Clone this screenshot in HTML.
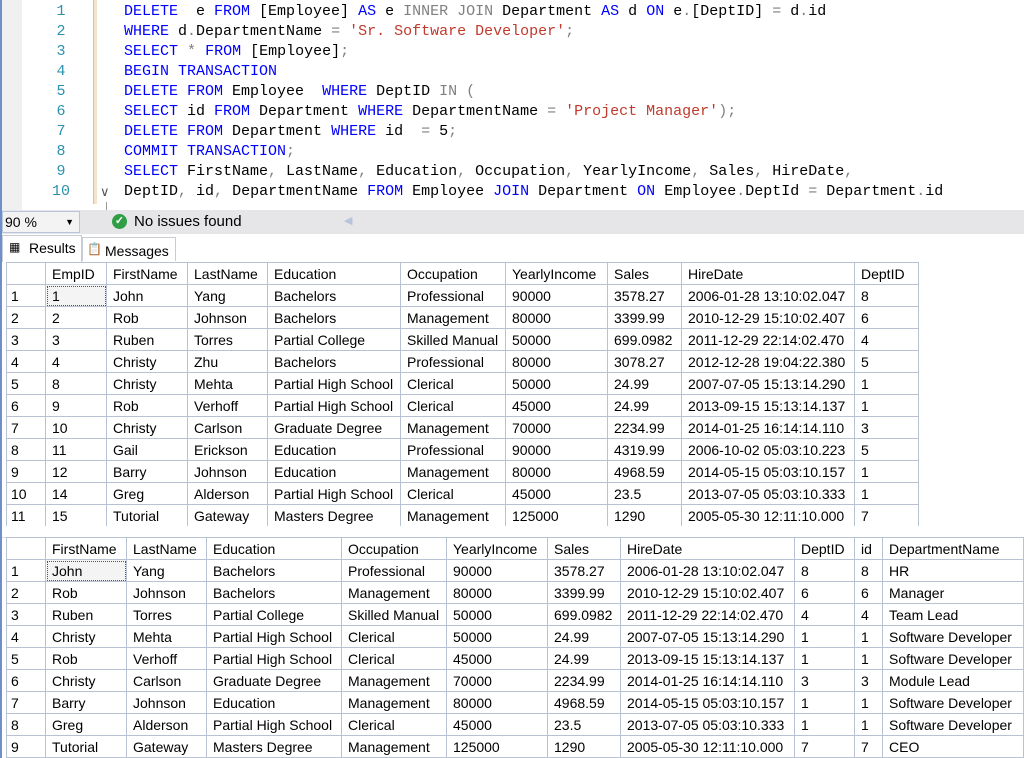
<!DOCTYPE html>
<html><head><meta charset="utf-8"><style>
*{margin:0;padding:0;box-sizing:border-box}
body{width:1024px;height:758px;overflow:hidden;background:#fff;position:relative;font-family:"Liberation Sans",Arial,sans-serif}
#ed{position:absolute;left:0;top:0;width:1024px;height:210px;background:#fff}
#gut{position:absolute;left:2px;top:0;width:20px;height:210px;background:#f0f0f0}
#lb{position:absolute;left:0;top:0;width:2px;height:758px;background:#6f8fc8}
.ln{position:absolute;left:46px;width:30px;text-align:center;font:15px "Liberation Mono",monospace;color:#2b91af;line-height:20px}
.cl{position:absolute;left:124px;font:15px "Liberation Mono",monospace;line-height:20px;white-space:pre;color:#000}
.k{color:#0000ff}.g{color:#808080}.s{color:#c0392b}
#bar{position:absolute;left:93px;top:0;width:4px;height:204px;background:#f5e5c8;border-left:1px solid #e8c27a}
#st{position:absolute;left:0;top:210px;width:1024px;height:24px;background:#e6e6e9}
#zm{position:absolute;left:2px;top:211px;width:78px;height:22px;background:#f3f3f3;border:1px solid #b8c6dc;font-size:14px;line-height:20px;padding-left:2px}
#tabs{position:absolute;left:2px;top:234px;width:1022px;height:28px;background:#fff}
.tab{position:absolute;top:3px;height:24px;font-size:14px;line-height:22px;border:1px solid #c8ccd4;border-bottom:none;background:#fff}
table{position:absolute;border-collapse:collapse;table-layout:fixed;font-size:14px;background:#fff}
td{border:1px solid #b9c2d2;height:22px;padding:0 0 0 6px;white-space:nowrap;overflow:hidden;line-height:20px}
td:first-child{padding-left:4px}
.sel{outline:1px dotted #555;outline-offset:-2px;background:#f4f4f4}
#mid{position:absolute;left:2px;top:526px;width:1022px;height:12px;background:#fff;border-bottom:1px solid #d8dde6}
</style></head><body>
<div id="ed">
<div id="gut"></div>
<div id="bar"></div>
<div class="ln" style="top:2px">1</div><div class="ln" style="top:22px">2</div><div class="ln" style="top:42px">3</div><div class="ln" style="top:62px">4</div><div class="ln" style="top:82px">5</div><div class="ln" style="top:102px">6</div><div class="ln" style="top:122px">7</div><div class="ln" style="top:142px">8</div><div class="ln" style="top:162px">9</div><div class="ln" style="top:182px">10</div>
<div style="position:absolute;left:100px;top:182px;font-size:13px;color:#555;line-height:20px">&#8744;</div>
<div style="position:absolute;left:106px;top:202px;width:1px;height:8px;background:#999"></div>
<div class="cl" style="top:2px"><span class="k">DELETE</span>  e <span class="k">FROM</span> [Employee] <span class="k">AS</span> e <span class="g">INNER JOIN</span> Department <span class="k">AS</span> d <span class="k">ON</span> e<span class="g">.</span>[DeptID] <span class="g">=</span> d<span class="g">.</span>id</div>
<div class="cl" style="top:22px"><span class="k">WHERE</span> d<span class="g">.</span>DepartmentName <span class="g">=</span> <span class="s">'Sr. Software Developer'</span><span class="g">;</span></div>
<div class="cl" style="top:42px"><span class="k">SELECT</span> <span class="g">*</span> <span class="k">FROM</span> [Employee]<span class="g">;</span></div>
<div class="cl" style="top:62px"><span class="k">BEGIN TRANSACTION</span></div>
<div class="cl" style="top:82px"><span class="k">DELETE FROM</span> Employee  <span class="k">WHERE</span> DeptID <span class="g">IN (</span></div>
<div class="cl" style="top:102px"><span class="k">SELECT</span> id <span class="k">FROM</span> Department <span class="k">WHERE</span> DepartmentName <span class="g">=</span> <span class="s">'Project Manager'</span><span class="g">);</span></div>
<div class="cl" style="top:122px"><span class="k">DELETE FROM</span> Department <span class="k">WHERE</span> id  <span class="g">=</span> 5<span class="g">;</span></div>
<div class="cl" style="top:142px"><span class="k">COMMIT TRANSACTION</span><span class="g">;</span></div>
<div class="cl" style="top:162px"><span class="k">SELECT</span> FirstName<span class="g">,</span> LastName<span class="g">,</span> Education<span class="g">,</span> Occupation<span class="g">,</span> YearlyIncome<span class="g">,</span> Sales<span class="g">,</span> HireDate<span class="g">,</span></div>
<div class="cl" style="top:182px">DeptID<span class="g">,</span> id<span class="g">,</span> DepartmentName <span class="k">FROM</span> Employee <span class="k">JOIN</span> Department <span class="k">ON</span> Employee<span class="g">.</span>DeptId <span class="g">=</span> Department<span class="g">.</span>id</div>
</div>
<div id="st"></div>
<div id="zm">90 %<span style="position:absolute;right:5px;top:0;font-size:9px">&#9660;</span></div>
<div style="position:absolute;left:112px;top:214px;width:15px;height:15px;border-radius:50%;background:#2f9e44;color:#fff;font-size:11px;line-height:15px;text-align:center;font-weight:bold">&#10003;</div>
<div style="position:absolute;left:134px;top:211px;font-size:15px;line-height:22px">No issues found</div>
<div style="position:absolute;left:344px;top:214px;color:#b8c4dc;font-size:11px">&#9664;</div>
<div id="tabs">
<div class="tab" style="left:0;width:80px;top:1px;height:27px"><span style="position:absolute;left:6px;top:0;font-size:12px">&#9638;</span><span style="position:absolute;left:26px;top:1px">Results</span></div>
<div class="tab" style="left:80px;width:94px"><span style="position:absolute;left:4px;top:0;font-size:12px">&#128203;</span><span style="position:absolute;left:22px;top:2px">Messages</span></div>
</div>
<div style="position:absolute;left:2px;top:262px;width:1022px;height:264px;background:#fff"></div>
<table style="left:6px;top:262px;width:912px">
<colgroup><col style="width:39px"><col style="width:61px"><col style="width:81px"><col style="width:80px"><col style="width:133px"><col style="width:105px"><col style="width:102px"><col style="width:74px"><col style="width:173px"><col style="width:64px"></colgroup>
<tr><td></td><td>EmpID</td><td>FirstName</td><td>LastName</td><td>Education</td><td>Occupation</td><td>YearlyIncome</td><td>Sales</td><td>HireDate</td><td>DeptID</td></tr>
<tr><td>1</td><td class="sel">1</td><td>John</td><td>Yang</td><td>Bachelors</td><td>Professional</td><td>90000</td><td>3578.27</td><td>2006-01-28 13:10:02.047</td><td>8</td></tr>
<tr><td>2</td><td>2</td><td>Rob</td><td>Johnson</td><td>Bachelors</td><td>Management</td><td>80000</td><td>3399.99</td><td>2010-12-29 15:10:02.407</td><td>6</td></tr>
<tr><td>3</td><td>3</td><td>Ruben</td><td>Torres</td><td>Partial College</td><td>Skilled Manual</td><td>50000</td><td>699.0982</td><td>2011-12-29 22:14:02.470</td><td>4</td></tr>
<tr><td>4</td><td>4</td><td>Christy</td><td>Zhu</td><td>Bachelors</td><td>Professional</td><td>80000</td><td>3078.27</td><td>2012-12-28 19:04:22.380</td><td>5</td></tr>
<tr><td>5</td><td>8</td><td>Christy</td><td>Mehta</td><td>Partial High School</td><td>Clerical</td><td>50000</td><td>24.99</td><td>2007-07-05 15:13:14.290</td><td>1</td></tr>
<tr><td>6</td><td>9</td><td>Rob</td><td>Verhoff</td><td>Partial High School</td><td>Clerical</td><td>45000</td><td>24.99</td><td>2013-09-15 15:13:14.137</td><td>1</td></tr>
<tr><td>7</td><td>10</td><td>Christy</td><td>Carlson</td><td>Graduate Degree</td><td>Management</td><td>70000</td><td>2234.99</td><td>2014-01-25 16:14:14.110</td><td>3</td></tr>
<tr><td>8</td><td>11</td><td>Gail</td><td>Erickson</td><td>Education</td><td>Professional</td><td>90000</td><td>4319.99</td><td>2006-10-02 05:03:10.223</td><td>5</td></tr>
<tr><td>9</td><td>12</td><td>Barry</td><td>Johnson</td><td>Education</td><td>Management</td><td>80000</td><td>4968.59</td><td>2014-05-15 05:03:10.157</td><td>1</td></tr>
<tr><td>10</td><td>14</td><td>Greg</td><td>Alderson</td><td>Partial High School</td><td>Clerical</td><td>45000</td><td>23.5</td><td>2013-07-05 05:03:10.333</td><td>1</td></tr>
<tr><td>11</td><td>15</td><td>Tutorial</td><td>Gateway</td><td>Masters Degree</td><td>Management</td><td>125000</td><td>1290</td><td>2005-05-30 12:11:10.000</td><td>7</td></tr>
</table>
<div id="mid"></div>
<table style="left:6px;top:537px;width:1017px">
<colgroup><col style="width:39px"><col style="width:81px"><col style="width:80px"><col style="width:135px"><col style="width:105px"><col style="width:101px"><col style="width:73px"><col style="width:174px"><col style="width:60px"><col style="width:28px"><col style="width:141px"></colgroup>
<tr><td></td><td>FirstName</td><td>LastName</td><td>Education</td><td>Occupation</td><td>YearlyIncome</td><td>Sales</td><td>HireDate</td><td>DeptID</td><td>id</td><td>DepartmentName</td></tr>
<tr><td>1</td><td class="sel">John</td><td>Yang</td><td>Bachelors</td><td>Professional</td><td>90000</td><td>3578.27</td><td>2006-01-28 13:10:02.047</td><td>8</td><td>8</td><td>HR</td></tr>
<tr><td>2</td><td>Rob</td><td>Johnson</td><td>Bachelors</td><td>Management</td><td>80000</td><td>3399.99</td><td>2010-12-29 15:10:02.407</td><td>6</td><td>6</td><td>Manager</td></tr>
<tr><td>3</td><td>Ruben</td><td>Torres</td><td>Partial College</td><td>Skilled Manual</td><td>50000</td><td>699.0982</td><td>2011-12-29 22:14:02.470</td><td>4</td><td>4</td><td>Team Lead</td></tr>
<tr><td>4</td><td>Christy</td><td>Mehta</td><td>Partial High School</td><td>Clerical</td><td>50000</td><td>24.99</td><td>2007-07-05 15:13:14.290</td><td>1</td><td>1</td><td>Software Developer</td></tr>
<tr><td>5</td><td>Rob</td><td>Verhoff</td><td>Partial High School</td><td>Clerical</td><td>45000</td><td>24.99</td><td>2013-09-15 15:13:14.137</td><td>1</td><td>1</td><td>Software Developer</td></tr>
<tr><td>6</td><td>Christy</td><td>Carlson</td><td>Graduate Degree</td><td>Management</td><td>70000</td><td>2234.99</td><td>2014-01-25 16:14:14.110</td><td>3</td><td>3</td><td>Module Lead</td></tr>
<tr><td>7</td><td>Barry</td><td>Johnson</td><td>Education</td><td>Management</td><td>80000</td><td>4968.59</td><td>2014-05-15 05:03:10.157</td><td>1</td><td>1</td><td>Software Developer</td></tr>
<tr><td>8</td><td>Greg</td><td>Alderson</td><td>Partial High School</td><td>Clerical</td><td>45000</td><td>23.5</td><td>2013-07-05 05:03:10.333</td><td>1</td><td>1</td><td>Software Developer</td></tr>
<tr><td>9</td><td>Tutorial</td><td>Gateway</td><td>Masters Degree</td><td>Management</td><td>125000</td><td>1290</td><td>2005-05-30 12:11:10.000</td><td>7</td><td>7</td><td>CEO</td></tr>
</table>
<div id="lb"></div>
</body></html>
